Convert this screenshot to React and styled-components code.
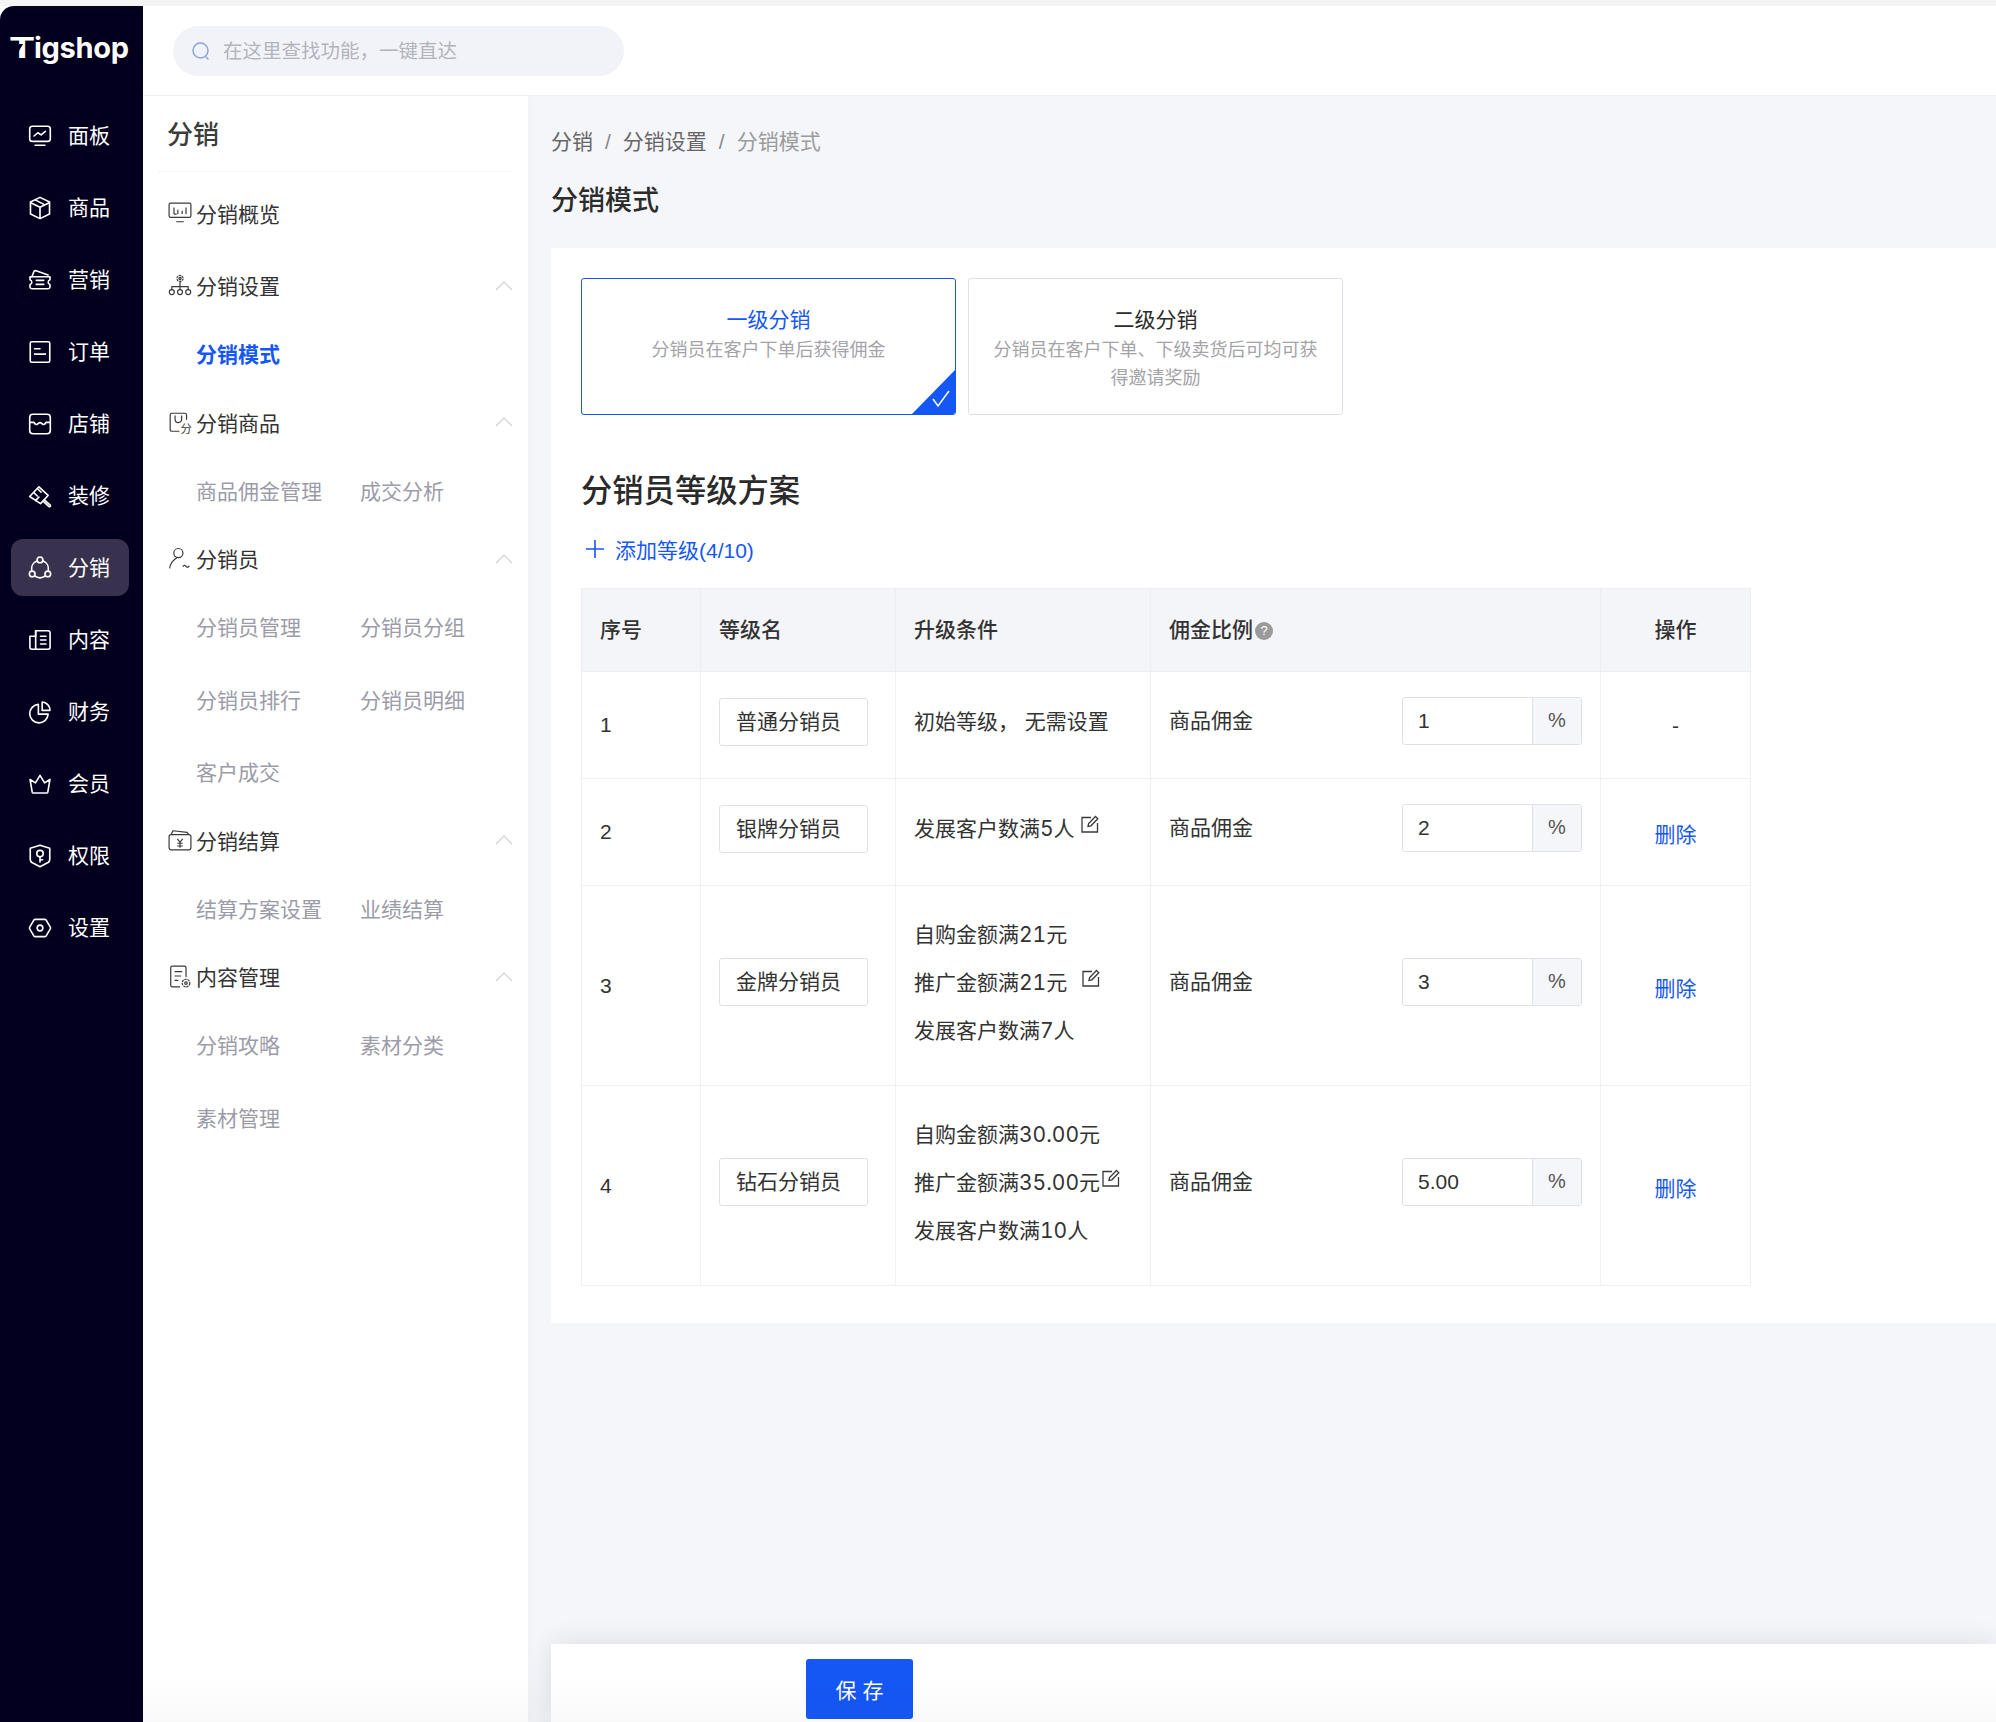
import styled, { createGlobalStyle } from "styled-components";

const GlobalStyle = createGlobalStyle`
  html, body {
    margin: 0;
    padding: 0;
    background: #f4f4f5;
  }
  body {
    font-family: "Liberation Sans", "Noto Sans CJK SC", sans-serif;
    color: #333;
  }
  * {
    box-sizing: border-box;
  }
`;

const BLUE = "#1557f5";

// 左侧主导航图标
const NAV_ICONS = {
  panel: (
    <>
      <rect x="2.5" y="3" width="19" height="14" rx="2.5" />
      <path d="M6.5 12l3.5-3 3 2 4-3.2M7.5 20.5h9" />
    </>
  ),
  goods: (
    <>
      <path d="M12 2.2l8.8 4.3v11L12 21.8l-8.8-4.3v-11z" />
      <path d="M3.4 7.2L12 11.4l8.6-4.2M12 11.4v10M7.5 4.5l8.6 4.4" />
    </>
  ),
  marketing: (
    <>
      <path d="M4.5 9l1.8-4.6c.3-.9 1.1-1.3 2-1l11.2 4" />
      <path d="M2.8 9h18.4v2.8a2.3 2.3 0 0 0 0 4.4v2.1a1.8 1.8 0 0 1-1.8 1.8H4.6a1.8 1.8 0 0 1-1.8-1.8v-2.1a2.3 2.3 0 0 0 0-4.4z" />
      <path d="M8.5 12.3h7M8.5 16h7" />
    </>
  ),
  order: (
    <>
      <rect x="3" y="2.5" width="18" height="19" rx="1.5" />
      <path d="M7 9h5M7 14h10" />
    </>
  ),
  store: (
    <>
      <rect x="2.5" y="3" width="19" height="18" rx="3" />
      <path d="M2.5 10.5h3.800c.5 0 .8 2 2.300 2s1.800-1.800 3.400-1.800 1.900 1.800 3.400 1.800 1.800-2 2.300-2h3.800" />
    </>
  ),
  decorate: (
    <>
      <path d="M2.5 12.500L11 3.500l8.500 8-7 7.500z" />
      <path d="M6.500 9l3 3M10 5.500l3 3M8 16l3-3M16 15.500l5.500 5c.6.7-.4 1.800-1.200 1.300L15 17" />
    </>
  ),
  distribution: (
    <>
      <path d="M9 5.500a8 8 0 0 0-4.700 8.700M15 5.500a8 8 0 0 1 4.700 8.700M7 19.300a8.500 8.500 0 0 0 10 0" />
      <circle cx="12" cy="4.500" r="2.600" />
      <circle cx="4.800" cy="17.500" r="2.600" />
      <circle cx="19.200" cy="17.500" r="2.600" />
    </>
  ),
  content: (
    <>
      <path d="M8 3.500h11.500a1.800 1.800 0 0 1 1.800 1.800v13.400a1.800 1.800 0 0 1-1.800 1.800H4.500a1.800 1.800 0 0 1-1.800-1.800V8.500H8z" />
      <path d="M8 3.500v16.800M12.500 8.500h5M12.500 12h5M12.500 15.700h5" />
    </>
  ),
  finance: (
    <>
      <path d="M10.500 5A8.500 8.500 0 1 0 19.500 14h-9z" />
      <path d="M14 2.800a7.500 7.500 0 0 1 7.200 7.700H14z" />
    </>
  ),
  member: <path d="M2.800 7.800l5 3.200L12 4l4.200 7 5-3.200-2 11.700a1 1 0 0 1-1 .8H5.800a1 1 0 0 1-1-.8z" />,
  permission: (
    <>
      <path d="M12 2l9 2.800v10.400c0 1.200-.6 2.100-1.600 2.800L12 22l-7.400-4c-1-.7-1.600-1.600-1.600-2.800V4.800z" />
      <circle cx="12" cy="9.800" r="3" />
      <path d="M12 12.800v4.700M12 15.500h2.400" />
    </>
  ),
  settings: (
    <>
      <path d="M7.600 4h8.800c.5 0 1 .3 1.300.7l3.800 6.500c.3.5.3 1.100 0 1.600l-3.800 6.500c-.3.4-.8.7-1.300.7H7.600c-.5 0-1-.3-1.300-.7l-3.800-6.500c-.3-.5-.3-1.100 0-1.600l3.800-6.500c.3-.4.8-.7 1.300-.7z" />
      <circle cx="12" cy="12" r="2.600" />
    </>
  ),
};

// 二级菜单图标
const SUB_ICONS = {
  overview: (
    <>
      <rect x="1" y="2" width="20" height="13" rx="1.500" />
      <path d="M5.500 6v6M5.500 12H8M9 8v4M13 9v3M16.500 6v6M7.500 19h7" />
    </>
  ),
  tree: (
    <>
      <circle cx="11" cy="5" r="2.800" strokeDasharray="2.200 .7" />
      <circle cx="11" cy="5" r="1" />
      <circle cx="3.500" cy="17.500" r="2.300" />
      <circle cx="11" cy="17.500" r="2.300" />
      <circle cx="18.500" cy="17.500" r="2.300" />
      <path d="M3.500 15.200v-2.700h15v2.700M11 8v7.200" />
    </>
  ),
  goods: (
    <>
      <path d="M10.500 19.500H3.500A1.500 1.500 0 0 1 2 18V4.500A1.500 1.500 0 0 1 3.500 3h12A1.500 1.500 0 0 1 17 4.500V9" />
      <path d="M6.500 5v3.500a3 3 0 0 0 6 0V5" />
      <text x="11.500" y="21.500" fontSize="10.500" fill="#3a3a3a" stroke="none">分</text>
    </>
  ),
  staff: (
    <>
      <circle cx="9.500" cy="6.500" r="4.200" />
      <path d="M1.500 20.500c.3-4 3-7.200 6.500-9.700M13.500 19c1-1.600 2-1.600 3-.3s2 1 3-.5" />
    </>
  ),
  settlement: (
    <>
      <rect x="1" y="6" width="20" height="14" rx="1.800" />
      <path d="M3 6l1.500-3.500 13 1.500 1.500 2" />
      <path d="M8.500 10l2.500 3 2.500-3M8.500 14h5M8.500 16.500h5M11 13v5" />
    </>
  ),
  document: (
    <>
      <path d="M11 21H4a1.500 1.500 0 0 1-1.500-1.500v-16A1.500 1.500 0 0 1 4 2h11a1.500 1.500 0 0 1 1.500 1.500V12" />
      <path d="M6 7h7M6 11h6M6 15h3.500" />
      <circle cx="16.500" cy="17.500" r="3.500" strokeDasharray="2.200 .7" />
      <circle cx="16.500" cy="17.500" r="1.200" />
    </>
  ),
};

const mainNav = [
  { key: "panel", label: "面板" },
  { key: "goods", label: "商品" },
  { key: "marketing", label: "营销" },
  { key: "order", label: "订单" },
  { key: "store", label: "店铺" },
  { key: "decorate", label: "装修" },
  { key: "distribution", label: "分销", active: true },
  { key: "content", label: "内容" },
  { key: "finance", label: "财务" },
  { key: "member", label: "会员" },
  { key: "permission", label: "权限" },
  { key: "settings", label: "设置" },
];

const subNav = [
  { icon: "tree", label: "分销设置", items: [{ label: "分销模式", active: true }] },
  { icon: "goods", label: "分销商品", items: [{ label: "商品佣金管理" }, { label: "成交分析" }] },
  {
    icon: "staff",
    label: "分销员",
    items: [
      { label: "分销员管理" },
      { label: "分销员分组" },
      { label: "分销员排行" },
      { label: "分销员明细" },
      { label: "客户成交" },
    ],
  },
  { icon: "settlement", label: "分销结算", items: [{ label: "结算方案设置" }, { label: "业绩结算" }] },
  { icon: "document", label: "内容管理", items: [{ label: "分销攻略" }, { label: "素材分类" }, { label: "素材管理" }] },
];

const levels = [
  { no: 1, name: "普通分销员", first: true, rules: ["初始等级， 无需设置"], rate: "1" },
  { no: 2, name: "银牌分销员", rules: ["发展客户数满5人"], editAt: 0, editGap: 6, rate: "2" },
  { no: 3, name: "金牌分销员", rules: ["自购金额满21元", "推广金额满21元", "发展客户数满7人"], editAt: 1, editGap: 15, rate: "3" },
  {
    no: 4,
    name: "钻石分销员",
    rules: ["自购金额满30.00元", "推广金额满35.00元", "发展客户数满10人"],
    editAt: 1,
    editGap: 2,
    rate: "5.00",
  },
];

const EditIcon = ({ gap }) => (
  <EditGlyph $gap={gap} viewBox="0 0 18 18">
    <path d="M10 2.500H1v14.500h15.500V8" />
    <path d="M7 11.500l.6-3L14.500 1.500l2.300 2.300-6.900 7z" />
  </EditGlyph>
);

const App = () => {
  return (
    <Page>
      <GlobalStyle />
      <TopStrip />
      <Shell>
        <Sidebar>
          <Logo>
            <LogoT>T</LogoT>igshop
          </Logo>
          <NavList>
            {mainNav.map((item) => (
              <NavItem key={item.key} $active={item.active}>
                <NavIcon viewBox="0 0 24 24">{NAV_ICONS[item.key]}</NavIcon>
                <NavLabel>{item.label}</NavLabel>
              </NavItem>
            ))}
          </NavList>
        </Sidebar>
        <Workspace>
          <Header>
            <SearchBox>
              <SearchIcon viewBox="0 0 20 20">
                <circle cx="9.500" cy="9.500" r="7.500" />
                <path d="M15 16l2 2" />
              </SearchIcon>
              <SearchText>在这里查找功能，一键直达</SearchText>
            </SearchBox>
          </Header>
          <Columns>
            <SubPanel>
              <SubTitle>分销</SubTitle>
              <SubList>
                <OverviewRow>
                  <SubIcon viewBox="0 0 22 22">{SUB_ICONS.overview}</SubIcon>
                  分销概览
                </OverviewRow>
                {subNav.map((group) => (
                  <div key={group.label}>
                    <GroupRow>
                      <SubIcon viewBox="0 0 22 22">{SUB_ICONS[group.icon]}</SubIcon>
                      {group.label}
                      <Chevron viewBox="0 0 18 10">
                        <path d="M1 9l8-8 8 8" />
                      </Chevron>
                    </GroupRow>
                    <LeafGrid>
                      {group.items.map((leaf) => (
                        <Leaf key={leaf.label} $active={leaf.active}>
                          {leaf.label}
                        </Leaf>
                      ))}
                    </LeafGrid>
                  </div>
                ))}
              </SubList>
            </SubPanel>
            <Main>
              <Breadcrumb>
                <Crumb>分销</Crumb>
                <CrumbSep>/</CrumbSep>
                <Crumb>分销设置</Crumb>
                <CrumbSep>/</CrumbSep>
                <Crumb $last>分销模式</Crumb>
              </Breadcrumb>
              <PageTitle>分销模式</PageTitle>
              <Card>
                <ModeRow>
                  <ModeCard $active>
                    <ModeName $active>一级分销</ModeName>
                    <ModeDesc>分销员在客户下单后获得佣金</ModeDesc>
                    <ModeCorner>
                      <svg viewBox="0 0 20 18" width="20" height="18" fill="none" stroke="#fff" strokeWidth="1.5">
                        <path d="M2 9l5 7L18 1" />
                      </svg>
                    </ModeCorner>
                  </ModeCard>
                  <ModeCard>
                    <ModeName>二级分销</ModeName>
                    <ModeDesc>分销员在客户下单、下级卖货后可均可获得邀请奖励</ModeDesc>
                  </ModeCard>
                </ModeRow>
                <SectionTitle>分销员等级方案</SectionTitle>
                <AddLevel>
                  <svg viewBox="0 0 18 18" width="18" height="18" fill="none" stroke={BLUE} strokeWidth="1.6">
                    <path d="M9 0v18M0 9h18" />
                  </svg>
                  添加等级(4/10)
                </AddLevel>
                <LevelTable>
                  <colgroup>
                    <col style={{ width: 119 }} />
                    <col style={{ width: 195 }} />
                    <col style={{ width: 255 }} />
                    <col style={{ width: 450 }} />
                    <col style={{ width: 150 }} />
                  </colgroup>
                  <thead>
                    <tr>
                      <HeadCell>序号</HeadCell>
                      <HeadCell>等级名</HeadCell>
                      <HeadCell>升级条件</HeadCell>
                      <HeadCell>
                        佣金比例
                        <HelpDot>?</HelpDot>
                      </HeadCell>
                      <HeadCell $center>操作</HeadCell>
                    </tr>
                  </thead>
                  <tbody>
                    {levels.map((level) => (
                      <LevelRow key={level.no} $tall={level.rules.length > 1}>
                        <BodyCell>{level.no}</BodyCell>
                        <BodyCell>
                          <NameInput>{level.name}</NameInput>
                        </BodyCell>
                        <BodyCell>
                          <RuleList>
                            {level.rules.map((rule, i) => (
                              <Rule key={rule}>
                                {rule}
                                {level.editAt === i && <EditIcon gap={level.editGap} />}
                              </Rule>
                            ))}
                          </RuleList>
                        </BodyCell>
                        <BodyCell>
                          <RateRow>
                            <RateLabel>商品佣金</RateLabel>
                            <RateInput>
                              <RateValue>{level.rate}</RateValue>
                              <RateUnit>%</RateUnit>
                            </RateInput>
                          </RateRow>
                        </BodyCell>
                        <BodyCell $center>
                          {level.first ? <Dash>-</Dash> : <DeleteLink>删除</DeleteLink>}
                        </BodyCell>
                      </LevelRow>
                    ))}
                  </tbody>
                </LevelTable>
              </Card>
              <FooterBar>
                <SaveButton>保 存</SaveButton>
              </FooterBar>
            </Main>
          </Columns>
          <BottomFade />
        </Workspace>
      </Shell>
    </Page>
  );
};

export default App;

const Page = styled.div`
  display: flex;
  flex-direction: column;
  width: 100%;
  height: 1722px;
  overflow: hidden;
`;
const TopStrip = styled.div`
  height: 6px;
  flex: none;
  background: #f4f4f5;
`;
const Shell = styled.div`
  flex: 1;
  min-height: 0;
  display: flex;
  background: #fff;
`;
const Sidebar = styled.aside`
  width: 143px;
  flex: none;
  background: #03001f;
  border-top-left-radius: 14px;
  color: #fff;
`;
const Logo = styled.div`
  height: 89px;
  padding: 24px 0 0 9px;
  font-family: "Inter", sans-serif;
  font-weight: 700;
  font-size: 29px;
  line-height: 36px;
  letter-spacing: -0.3px;
  color: #fff;
  white-space: nowrap;
`;
const LogoT = styled.span`
  position: relative;
  display: inline-block;
  width: 25px;
  transform-origin: left center;
  transform: scaleX(1.35);

  /* 字母 T 左下的斜切口 */
  &::after {
    content: "";
    position: absolute;
    left: 5px;
    top: 14px;
    width: 3px;
    height: 11px;
    background: #03001f;
    transform: skewX(-24deg);
  }
`;
const NavList = styled.nav`
  display: flex;
  flex-direction: column;
  gap: 15px;
  padding: 12px 0 0 11px;
`;
const NavItem = styled.div`
  width: 118px;
  height: 57px;
  display: flex;
  align-items: center;
  gap: 15px;
  padding-left: 16px;
  font-size: 21px;
  border-radius: 12px;
  background: ${({ $active }) => ($active ? "#38324e" : "transparent")};
`;
const NavLabel = styled.span`
  padding-bottom: 3px;
`;
const NavIcon = styled.svg`
  width: 26px;
  height: 26px;
  flex: none;
  fill: none;
  stroke: #fff;
  stroke-width: 1.5;
  stroke-linejoin: round;
  stroke-linecap: round;
`;
const Workspace = styled.div`
  position: relative;
  flex: 1;
  min-width: 0;
  display: flex;
  flex-direction: column;
`;
const Header = styled.header`
  height: 90px;
  flex: none;
  padding: 20px 0 0 30px;
  background: #fff;
  border-bottom: 1px solid #f0f1f5;
`;
const SearchBox = styled.div`
  width: 451px;
  height: 50px;
  display: flex;
  align-items: center;
  gap: 12px;
  padding-left: 18px;
  border-radius: 25px;
  background: #f2f3f8;
  color: #b2b4bd;
  font-size: 19.5px;
`;
const SearchText = styled.span`
  padding-bottom: 3px;
`;
const SearchIcon = styled.svg`
  width: 20px;
  height: 20px;
  flex: none;
  fill: none;
  stroke: #8ba6dc;
  stroke-width: 1.5;
  stroke-linecap: round;
`;
const Columns = styled.div`
  flex: 1;
  min-height: 0;
  display: flex;
`;
const SubPanel = styled.div`
  position: relative;
  z-index: 1;
  width: 385px;
  flex: none;
  padding: 0 15px;
  background: #fff;
  box-shadow: 3px 0 8px rgba(30, 50, 90, 0.02);
`;
const SubTitle = styled.div`
  height: 76px;
  display: flex;
  align-items: center;
  padding: 0 0 3px 9px;
  border-bottom: 1px solid #f2f3f6;
  font-size: 26px;
  font-weight: 500;
  color: #3c3c3c;
`;
const SubList = styled.div`
  padding-top: 1px;
`;
const OverviewRow = styled.div`
  height: 80px;
  display: flex;
  align-items: center;
  gap: 4px;
  padding-left: 10px;
  font-size: 21px;
  color: #333;
`;
const GroupRow = styled(OverviewRow)`
  height: 64px;
`;
const SubIcon = styled.svg`
  width: 24px;
  height: 24px;
  flex: none;
  fill: none;
  stroke: #3a3a3a;
  stroke-width: 1.1;
  stroke-linejoin: round;
`;
const Chevron = styled.svg`
  width: 18px;
  height: 10px;
  margin: 1px 0 0 auto;
  fill: none;
  stroke: #cfd0d4;
  stroke-width: 1.2;
`;
const LeafGrid = styled.div`
  display: grid;
  grid-template-columns: 164px 1fr;
  padding-left: 38px;
`;
const Leaf = styled.div`
  height: 72.5px;
  display: flex;
  align-items: center;
  font-size: 21px;
  white-space: nowrap;
  color: ${({ $active }) => ($active ? BLUE : "#9b9ca8")};
  font-weight: ${({ $active }) => ($active ? 600 : 400)};
`;
const Main = styled.main`
  flex: 1;
  min-width: 0;
  display: flex;
  flex-direction: column;
  padding: 29px 0 0 23px;
  background: #f5f6fa;
`;
const Breadcrumb = styled.div`
  height: 30px;
  display: flex;
  align-items: center;
  gap: 12px;
  font-size: 21px;
`;
const Crumb = styled.span`
  color: ${({ $last }) => ($last ? "#9b9b9b" : "#666")};
`;
const CrumbSep = styled.span`
  margin-top: 3px;
  color: #888;
`;
const PageTitle = styled.h1`
  height: 36px;
  margin: 28px 0 29px;
  font-size: 27px;
  line-height: 36px;
  font-weight: 500;
  color: #2c2c2c;
`;
const Card = styled.section`
  height: 1075px;
  flex: none;
  padding: 30px 0 0 30px;
  background: #fff;
`;
const ModeRow = styled.div`
  display: flex;
  gap: 12px;
`;
const ModeCard = styled.div`
  position: relative;
  width: 375px;
  height: 137px;
  padding: 26px 22px 0;
  overflow: hidden;
  text-align: center;
  border: 1px solid ${({ $active }) => ($active ? BLUE : "#e0e1e8")};
  border-radius: 3px;
`;
const ModeName = styled.div`
  font-size: 21px;
  line-height: 30px;
  color: ${({ $active }) => ($active ? BLUE : "#2c2c2c")};
`;
const ModeDesc = styled.div`
  margin-top: 1px;
  font-size: 18px;
  line-height: 28px;
  color: #a3a3a8;
`;
const ModeCorner = styled.div`
  position: absolute;
  right: -1px;
  bottom: -1px;
  width: 45px;
  height: 46px;
  background: ${BLUE};
  clip-path: polygon(100% 0, 100% 100%, 0 100%);

  svg {
    position: absolute;
    right: 5px;
    bottom: 7px;
  }
`;
const SectionTitle = styled.h2`
  height: 44px;
  margin: 55px 0 20px;
  font-size: 31.3px;
  line-height: 44px;
  font-weight: 500;
  color: #2a2a2a;
`;
const AddLevel = styled.div`
  height: 30px;
  display: flex;
  align-items: center;
  gap: 11px;
  padding-left: 5px;
  margin-bottom: 24px;
  font-size: 21px;
  color: ${BLUE};
`;
const LevelTable = styled.table`
  width: 1169px;
  table-layout: fixed;
  border-collapse: collapse;
  font-size: 21px;
`;
const HeadCell = styled.th`
  height: 83px;
  padding: 0 0 5px ${({ $center }) => ($center ? 0 : 18)}px;
  text-align: ${({ $center }) => ($center ? "center" : "left")};
  font-weight: 500;
  color: #333;
  background: #f4f5f9;
  border: 1.5px solid #eceef3;
`;
const LevelRow = styled.tr`
  height: ${({ $tall }) => ($tall ? 200 : 107)}px;
`;
const BodyCell = styled.td`
  padding: 0 ${({ $center }) => ($center ? 0 : 18)}px;
  text-align: ${({ $center }) => ($center ? "center" : "left")};
  border: 1.5px solid #eef0f5;
  color: #333;
`;
const NameInput = styled.div`
  width: 149px;
  height: 48px;
  margin-top: -7px;
  padding-left: 16px;
  line-height: 46px;
  border: 1.5px solid #dfe1e8;
  border-radius: 3px;
`;
const RuleList = styled.div`
  display: flex;
  flex-direction: column;
  gap: 18px;
  margin-top: -6px;
  font-family: "Inter", "Noto Sans CJK SC", sans-serif;
  font-variant-numeric: tabular-nums;
`;
const Rule = styled.div`
  line-height: 30px;
  white-space: nowrap;
`;
const EditGlyph = styled.svg`
  width: 18px;
  height: 18px;
  margin-left: ${({ $gap }) => $gap}px;
  vertical-align: 3px;
  fill: none;
  stroke: #3a3a3a;
  stroke-width: 1.3;
`;
const RateRow = styled.div`
  display: flex;
  align-items: center;
  justify-content: space-between;
  margin-top: -8px;
`;
const RateLabel = styled.span`
  padding-bottom: 4px;
`;
const RateInput = styled.div`
  width: 180px;
  height: 48px;
  display: flex;
  border: 1.5px solid #dfe1e8;
  border-radius: 3px;
`;
const RateValue = styled.div`
  flex: 1;
  padding-left: 15px;
  line-height: 45px;
  font-size: 21px;
`;
const RateUnit = styled.div`
  width: 49px;
  text-align: center;
  line-height: 45px;
  font-size: 20px;
  color: #555;
  background: #f5f6fa;
  border-left: 1.5px solid #dfe1e8;
`;
const HelpDot = styled.span`
  display: inline-block;
  width: 18px;
  height: 18px;
  margin-left: 2px;
  border-radius: 50%;
  background: #9a9a9a;
  color: #fff;
  font-size: 13px;
  line-height: 18px;
  text-align: center;
  vertical-align: 2px;
`;
const Dash = styled.span`
  position: relative;
  top: 1px;
`;
const DeleteLink = styled.span`
  position: relative;
  top: 1px;
  color: ${BLUE};
`;
const FooterBar = styled.footer`
  margin-top: auto;
  height: 78px;
  flex: none;
  padding: 15px 0 0 255px;
  background: #fff;
  box-shadow: 0 0 28px rgba(20, 30, 60, 0.12);
`;
const SaveButton = styled.button`
  width: 107px;
  height: 60px;
  padding: 0;
  border: none;
  border-radius: 3px;
  background: ${BLUE};
  color: #fff;
  font-family: inherit;
  font-size: 21px;
`;
// 页面底部的淡灰渐变，盖在内容之上
const BottomFade = styled.div`
  position: absolute;
  left: 0;
  right: 0;
  bottom: 0;
  height: 48px;
  z-index: 2;
  pointer-events: none;
  background: linear-gradient(to bottom, rgba(0, 0, 0, 0), rgba(0, 0, 0, 0.025));
`;
